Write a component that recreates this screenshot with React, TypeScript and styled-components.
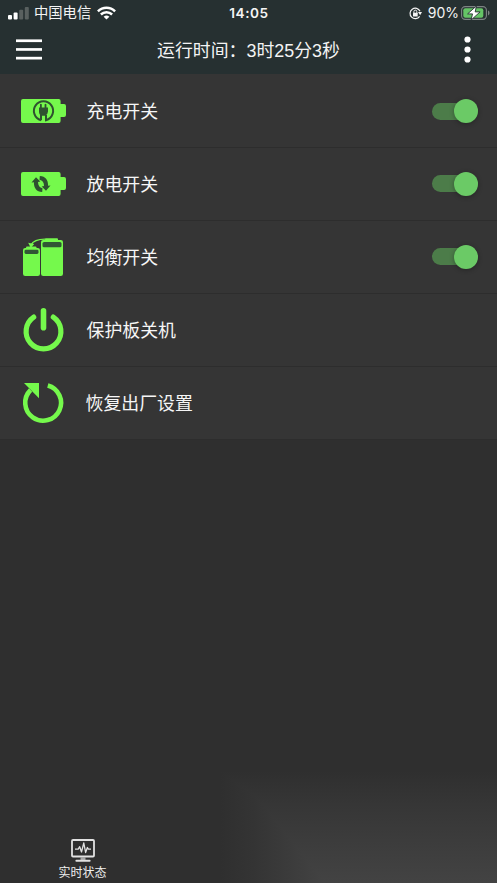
import React from 'react';
import styled, { createGlobalStyle } from 'styled-components';

const GlobalStyle = createGlobalStyle`
  * { box-sizing: border-box; }
  html, body { margin: 0; padding: 0; background: #2f2f2f; }
  svg { display: block; }
`;

const Screen = styled.div`
  position: relative;
  display: flex;
  flex-direction: column;
  width: 497px;
  height: 883px;
  overflow: hidden;
  background: #2f2f2f;
  color: #f4f4f4;
  font-family: "Liberation Sans", "Noto Sans CJK SC", sans-serif;
`;

const Header = styled.header`
  height: 74px;
  background: #263031;
`;

const StatusBar = styled.div`
  display: grid;
  grid-template-columns: 1fr auto 1fr;
  align-items: center;
  height: 26px;
  padding: 0 7px 0 8px;
`;

const StatusGroup = styled.div<{ $end?: boolean }>`
  display: flex;
  align-items: center;
  justify-content: ${(p) => (p.$end ? 'flex-end' : 'flex-start')};
`;

const Carrier = styled.span`
  margin: 0 6px 0 5px;
  font-size: 14.3px;
  line-height: 26px;
`;

const Clock = styled.span`
  font-family: Inter, sans-serif;
  font-size: 13.6px;
  font-weight: 600;
  letter-spacing: 0.55px;
  line-height: 26px;
`;

const Percent = styled.span`
  margin: 0 2px 0 6px;
  font-family: Inter, sans-serif;
  font-size: 14px;
  line-height: 26px;
`;

const NavBar = styled.div`
  display: grid;
  grid-template-columns: 42px 1fr 42px;
  align-items: center;
  height: 48px;
`;

const IconButton = styled.button<{ $end?: boolean }>`
  display: flex;
  justify-content: ${(p) => (p.$end ? 'flex-end' : 'flex-start')};
  padding: ${(p) => (p.$end ? '0 26px 0 0' : '0 0 0 16px')};
  border: 0;
  background: none;
  color: #fff;
`;

const Title = styled.h1`
  margin: 0;
  padding-top: 2px;
  font-size: 17.9px;
  font-weight: 400;
  line-height: 26px;
  text-align: center;
  white-space: nowrap;
`;

const List = styled.ul`
  margin: 0;
  padding: 0;
  list-style: none;
`;

const Row = styled.li`
  display: flex;
  align-items: center;
  height: 73px;
  padding: 0 19px 1px 19px;
  border-bottom: 1px solid #2d2d2d;
  background: #353535;

  &:first-child {
    height: 74px;
    padding: 1px 19px 0 19px;
  }
`;

const IconBox = styled.div`
  width: 48px;
  height: 48px;
  color: #75f94c;
`;

const Label = styled.span<{ $shift?: number }>`
  flex: 1;
  margin-left: ${(p) => 19.5 + (p.$shift ?? 0)}px;
  padding-top: 2px;
  font-size: 17.9px;
  font-weight: 400;
  line-height: 26px;
  color: #f6f6f6;
`;

const Track = styled.button`
  display: flex;
  align-items: center;
  justify-content: flex-end;
  width: 46px;
  height: 17px;
  padding: 0;
  border: 0;
  border-radius: 9px;
  background: #4c7c49;
`;

const Thumb = styled.span`
  flex: none;
  width: 24px;
  height: 24px;
  border-radius: 50%;
  background: #6bca66;
  box-shadow: 0 1px 5px rgba(0, 0, 0, 0.3);
`;

const Body = styled.main`
  flex: 1;
`;

const TabBar = styled.nav`
  position: relative;
  z-index: 1;
  display: flex;
  height: 46px;
`;

const Tab = styled.button`
  display: flex;
  flex-direction: column;
  align-items: center;
  width: 165px;
  padding: 2px 0 0;
  border: 0;
  background: none;
  color: #efefef;
  font: 400 12px/16px "Liberation Sans", "Noto Sans CJK SC", sans-serif;
`;

const TabLabel = styled.span`
  margin-top: 2px;
`;

/* Soft light lying over the lower right corner of the screen. */
const Glow = styled.div`
  position: absolute;
  right: 0;
  bottom: 0;
  width: 277px;
  height: 112px;
  background: linear-gradient(to bottom, #2f2f2f, #363636 30%, #434343),
    linear-gradient(to right, #2f2f2f, #343434 12%, #434343 38%, #444 100%);
  background-blend-mode: darken;
`;

const SignalIcon = () => (
  <svg width="21" height="13" viewBox="0 0 21 13">
    <rect x="0" y="8" width="4" height="4.5" rx="1" fill="#fff" />
    <rect x="5.6" y="5.5" width="4" height="7" rx="1" fill="#fff" />
    <rect x="11.2" y="2.8" width="4" height="9.7" rx="1" fill="#59605f" />
    <rect x="16.8" y="0" width="4" height="12.5" rx="1" fill="#59605f" />
  </svg>
);

const WifiIcon = () => (
  <svg width="19" height="14" viewBox="0 0 19 14" fill="none" stroke="#fff" strokeWidth="2.5">
    <path d="M.9 5.3a12.4 12.4 0 0 1 17.2 0" />
    <path d="M3.9 8.5a8 8 0 0 1 11.2 0" />
    <path d="M9.5 13.6 6.6 10.8a4.2 4.2 0 0 1 5.8 0Z" fill="#fff" stroke="none" />
  </svg>
);

const LockIcon = () => (
  <svg width="13" height="13" viewBox="0 0 13 13" fill="none" stroke="#f4f4f4">
    <path d="M10.600 9.300a5.200 5.200 0 1 1 .4-5" strokeWidth="1.2" />
    <path d="M9 5h4l-1.900 3.200Z" fill="#f4f4f4" stroke="none" />
    <rect x="4" y="5.8" width="4.7" height="3.7" rx=".5" fill="#f4f4f4" stroke="none" />
    <path d="M4.9 6V4.6a1.45 1.45 0 0 1 2.9 0V6" strokeWidth="1" />
  </svg>
);

const PhoneBatteryIcon = () => (
  <svg width="29" height="14" viewBox="0 0 29 14">
    <rect x=".6" y=".6" width="24.8" height="12.8" rx="3.6" fill="none" stroke="#7d8483" strokeWidth="1.1" />
    <rect x="2.3" y="2.2" width="20" height="9.6" rx="2" fill="#65c466" />
    <path d="M27 4.6q1.6.5 1.6 2.4T27 9.4Z" fill="#7d8483" />
    <path d="M15.400 0 6.600 7.900h4.900L10.100 14l9-8.100h-4.900Z" fill="#fff" stroke="#263031" strokeWidth=".9" />
  </svg>
);

const MenuIcon = () => (
  <svg width="26" height="22" viewBox="0 0 26 22" fill="#fff">
    <rect y=".4" width="26" height="2.7" />
    <rect y="9.1" width="26" height="2.7" />
    <rect y="17.8" width="26" height="2.7" />
  </svg>
);

const MoreIcon = () => (
  <svg width="7" height="28" viewBox="0 0 7 28" fill="#fff">
    <circle cx="3.5" cy="3.5" r="3.1" />
    <circle cx="3.5" cy="13.5" r="3.1" />
    <circle cx="3.5" cy="23.5" r="3.1" />
  </svg>
);

const BatteryBody = () => (
  <path
    d="M4 12H39.600a2 2 0 0 1 2 2V17H45a2 2 0 0 1 2 2V28a2 2 0 0 1-2 2H41.600V34a2 2 0 0 1-2 2H4a2 2 0 0 1-2-2V14a2 2 0 0 1 2-2Z"
    fill="currentColor"
  />
);

const ChargeIcon = () => (
  <svg width="48" height="48" viewBox="0 0 48 48">
    <BatteryBody />
    <path d="M22 33.200a9.600 9.600 0 1 1 5 0V28" fill="none" stroke="#2f5130" strokeWidth="2" />
    <path d="M22 33.200V28" fill="none" stroke="#2f5130" strokeWidth="2" />
    <path
      d="M20 20.500H21V17.300q.8-1.300 1.800 0V20.500H25.600V17.300q.9-1.300 1.800 0V20.500H29V24.500Q28.600 28 26.400 28.800H22.500Q20 28 20 24.500Z"
      fill="#2f5130"
    />
  </svg>
);

const DischargeIcon = () => (
  <svg width="48" height="48" viewBox="0 0 48 48">
    <BatteryBody />
    <g fill="#2f5130">
      <path d="M12.500 22.500 17 17.300 21.300 21.600 19 22C19 25.500 20.500 27.600 23.500 28.200L23.200 32C17.500 31.800 14.800 28 14.900 22.200Z" />
      <path d="M31.500 25.500 27 30.700 22.700 26.400 25 26C25 22.500 23.500 20.400 20.500 19.800L20.800 16C26.500 16.200 29.200 20 29.100 25.800Z" />
    </g>
  </svg>
);

const BalanceIcon = () => (
  <svg width="48" height="48" viewBox="0 0 48 48">
    <g fill="currentColor">
      <rect x="4" y="15" width="17" height="28" rx="2.2" />
      <rect x="22" y="7" width="22" height="36" rx="2.2" />
      <rect x="7" y="13.500" width="10.500" height="3" rx="1" />
      <rect x="26" y="5.200" width="13" height="3" rx="1" />
      <path d="m9.200 9.800 6 1.200-3.400 4Z" />
    </g>
    <path d="M12 12Q15 6 26.500 6.100" fill="none" stroke="currentColor" strokeWidth="1.400" />
    <rect x="5.500" y="16.700" width="14" height="4.300" rx="1.4" fill="#315635" />
    <rect x="23.500" y="8.900" width="19" height="5.400" rx="1.600" fill="#315635" />
  </svg>
);

const PowerIcon = () => (
  <svg width="48" height="48" viewBox="0 0 48 48" fill="none" stroke="currentColor" strokeWidth="5.200" strokeLinecap="round">
    <path d="M14.700 11.100a17.400 17.400 0 1 0 19.600 0" />
    <path d="M24.500 4.800V21.800" strokeWidth="5.600" />
  </svg>
);

const ResetIcon = () => (
  <svg width="48" height="48" viewBox="0 0 48 48">
    <path d="M28.800 6.500A17.900 17.900 0 1 1 11.600 11" fill="none" stroke="currentColor" strokeWidth="4.600" />
    <path d="M5 4H20V19.200Z" fill="currentColor" />
  </svg>
);

const MonitorIcon = () => (
  <svg width="24" height="24" viewBox="0 0 24 24" fill="none" stroke="#e2e2e2">
    <rect x="1" y="1" width="22" height="16.500" rx="1" strokeWidth="1.800" />
    <path d="M4 10.200h3.200l1.500-2.500 1.800 5.300 2.300-9 1.800 9.500 1.800-5 1 1.700H20" strokeWidth="1.300" strokeLinejoin="round" />
    <path d="M9.500 18h5v3h-5Z" fill="#a5a5a5" stroke="none" />
    <path d="M5.400 21.800h13.200" strokeWidth="2.100" strokeLinecap="round" />
  </svg>
);

const Toggle = ({ label }: { label: string }) => (
  <Track type="button" role="switch" aria-checked="true" aria-label={label}>
    <Thumb />
  </Track>
);

const settings = [
  { label: '充电开关', Icon: ChargeIcon, toggle: true },
  { label: '放电开关', Icon: DischargeIcon, toggle: true },
  { label: '均衡开关', Icon: BalanceIcon, toggle: true },
  { label: '保护板关机', Icon: PowerIcon, toggle: false },
  { label: '恢复出厂设置', Icon: ResetIcon, toggle: false, shift: -1 },
];

export default function App() {
  return (
    <>
      <GlobalStyle />
      <Screen>
        <Header>
          <StatusBar>
            <StatusGroup>
              <SignalIcon />
              <Carrier>中国电信</Carrier>
              <WifiIcon />
            </StatusGroup>
            <Clock>14:05</Clock>
            <StatusGroup $end>
              <LockIcon />
              <Percent>90%</Percent>
              <PhoneBatteryIcon />
            </StatusGroup>
          </StatusBar>
          <NavBar>
            <IconButton type="button" aria-label="菜单">
              <MenuIcon />
            </IconButton>
            <Title>运行时间：3时25分3秒</Title>
            <IconButton type="button" aria-label="更多" $end>
              <MoreIcon />
            </IconButton>
          </NavBar>
        </Header>
        <Body>
          <List>
            {settings.map(({ label, Icon, toggle, shift }) => (
              <Row key={label}>
                <IconBox>
                  <Icon />
                </IconBox>
                <Label $shift={shift}>{label}</Label>
                {toggle && <Toggle label={label} />}
              </Row>
            ))}
          </List>
        </Body>
        <Glow />
        <TabBar>
          <Tab type="button">
            <MonitorIcon />
            <TabLabel>实时状态</TabLabel>
          </Tab>
        </TabBar>
      </Screen>
    </>
  );
}
